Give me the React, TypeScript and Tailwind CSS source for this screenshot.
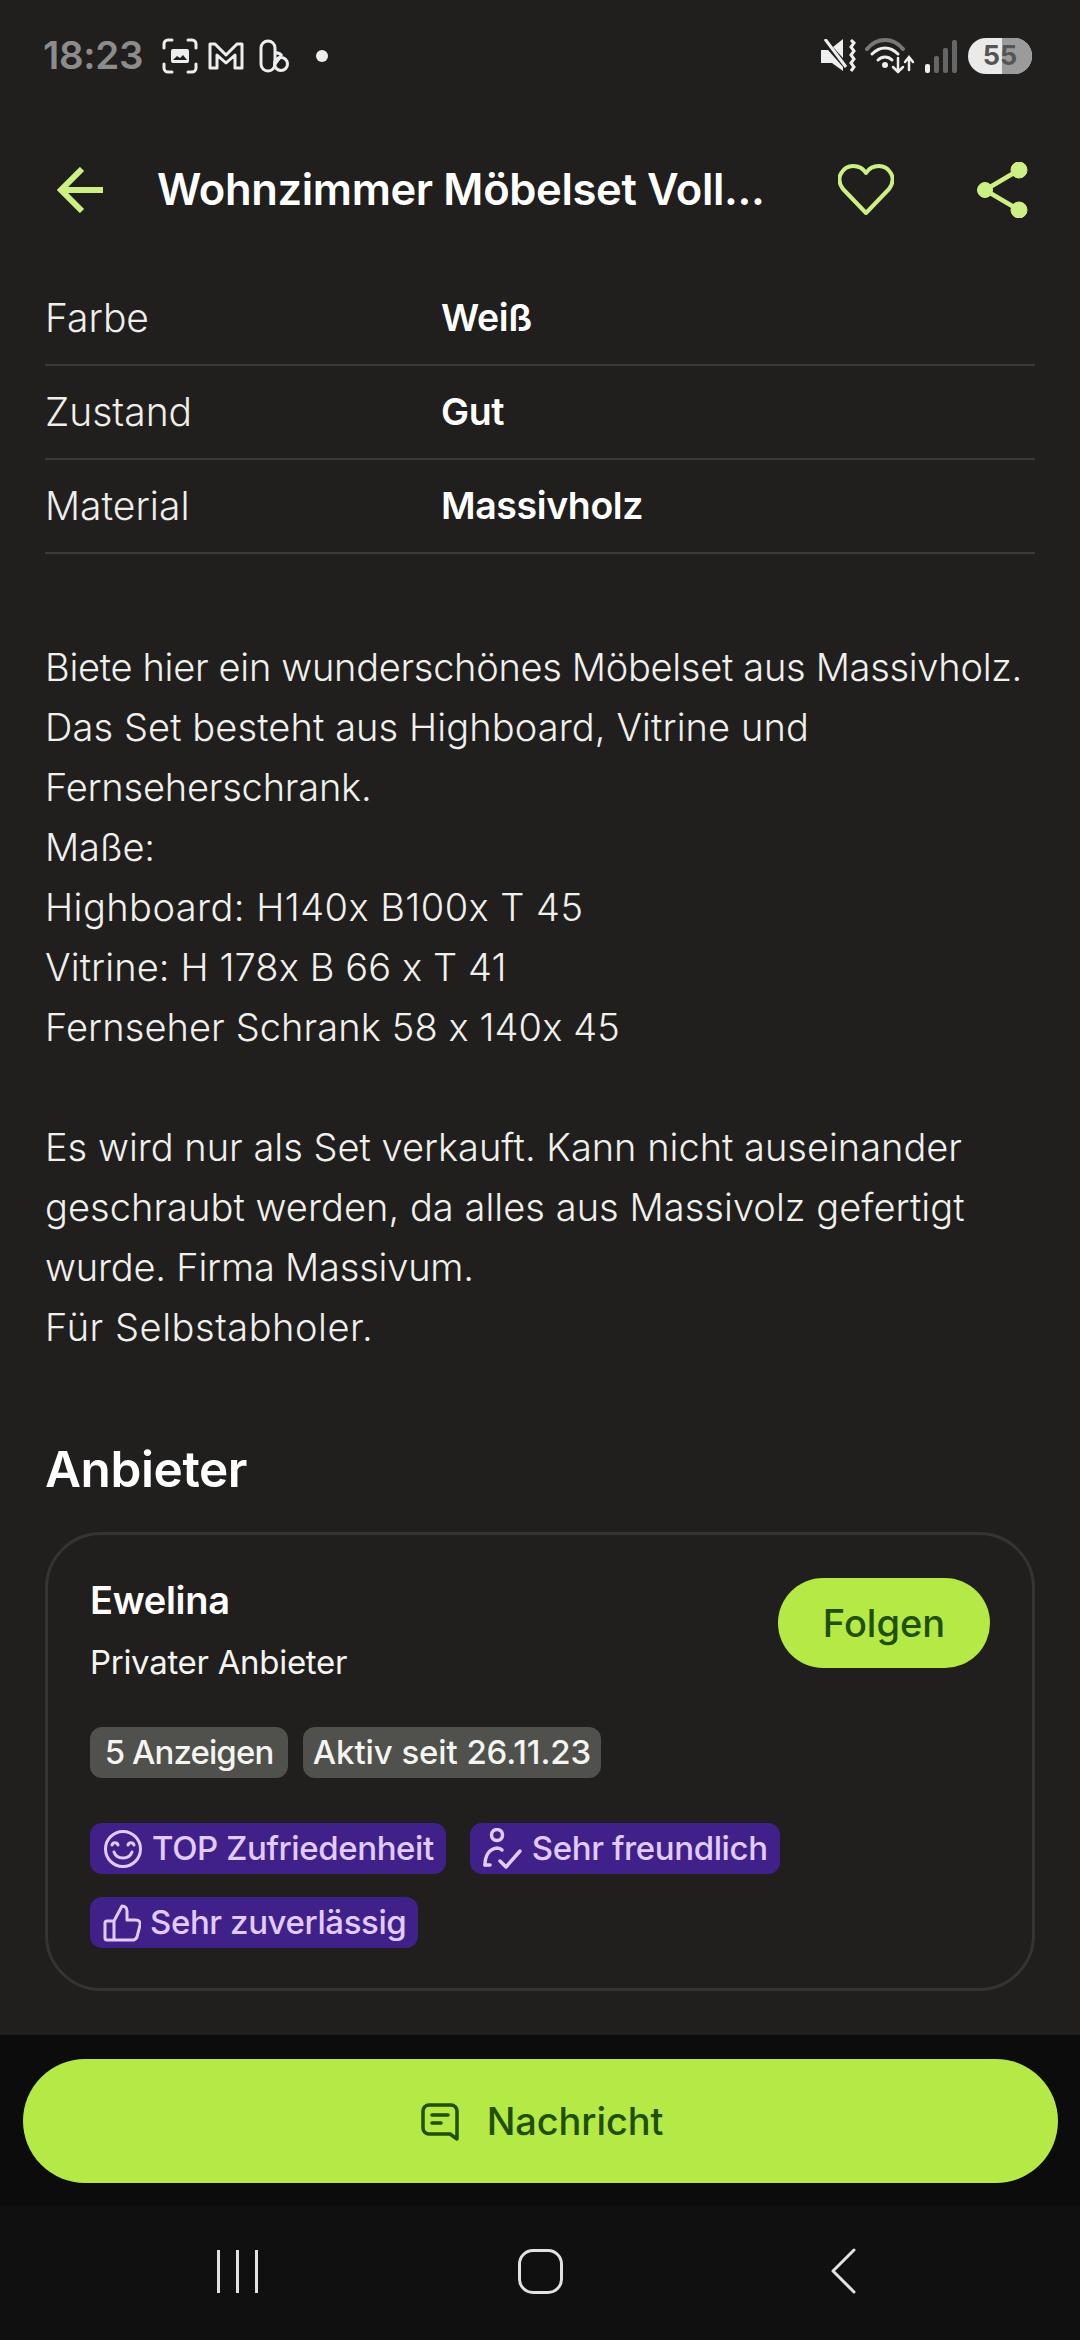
import React from "react";

const font = { fontFamily: '"Inter","Noto Sans",sans-serif' };

function Row({ label, value }: { label: string; value: string }) {
  return (
    <div className="flex h-[94px] items-center border-b-2 border-[#3a3a38]">
      <div className="w-[396px] text-[39px] font-light text-[#eeeeea]">{label}</div>
      <div className="text-[37.5px] font-semibold text-white tracking-[-0.4px]">{value}</div>
    </div>
  );
}

function Chip({ w, children }: { w: string; children: React.ReactNode }) {
  return (
    <div className={`flex h-[51px] items-center justify-center rounded-[12px] bg-[#50504c] text-[33px] font-medium text-[#f4f4f0] ${w}`}>
      {children}
    </div>
  );
}

function Purple({ icon, children }: { icon: React.ReactNode; children: React.ReactNode }) {
  return (
    <div className="flex h-[51px] items-center gap-[9px] rounded-[12px] bg-[#40218a] pl-[13px] pr-[12px] text-[33px] font-medium text-[#e2ccff] tracking-[-0.4px]">
      {icon}
      <span>{children}</span>
    </div>
  );
}

export default function App() {
  return (
    <div style={font} className="flex h-[2340px] w-[1080px] flex-col overflow-hidden bg-[#201f1e]">
      {/* status bar */}
      <div className="flex h-[112px] items-center pl-[43px] pr-[48px]">
        <span className="text-[38.5px] font-semibold text-[#8c8c8c] tracking-[-0.3px]">18:23</span>
        <div className="ml-[19px] flex items-center">
          <svg width="36" height="36" viewBox="0 0 36 36" fill="none" stroke="#eee" strokeWidth="3" strokeLinecap="round">
            <path d="M2 10V6a4 4 0 0 1 4-4h4M26 2h4a4 4 0 0 1 4 4v4M34 26v4a4 4 0 0 1-4 4h-4M10 34H6a4 4 0 0 1-4-4v-4" />
            <rect x="9" y="11" width="18" height="14" rx="2" fill="#eee" stroke="none" />
            <path d="M11 22l4-4 3 2 3-3 4 5z" fill="#201f1e" stroke="none" />
          </svg>
          <svg width="36" height="30" viewBox="0 0 36 30" fill="none" stroke="#eee" strokeWidth="3" strokeLinejoin="round" className="ml-[10px]">
            <path d="M2 3h5l11 11L29 3h5v24h-7V14l-9 8-9-8v13H2z" />
          </svg>
          <svg width="30" height="34" viewBox="0 0 30 34" fill="none" stroke="#eee" strokeWidth="3" className="ml-[15px]">
            <rect x="2" y="2" width="14" height="30" rx="7" />
            <path d="M16 14a7 7 0 0 1 7 3" />
            <circle cx="22" cy="25" r="6.5" />
            <path d="M16 25l6-8" />
          </svg>
          <div className="ml-[27px] h-[12px] w-[12px] rounded-full bg-[#eee]" />
        </div>
        <div className="ml-auto flex items-center">
          <svg width="36" height="34" viewBox="0 0 36 34" className="mr-[9px]" fill="#eee">
            <path d="M1 11h7l15 17v4l-11-8H1z" />
            <path d="M13 8l10-8v19z" />
            <path d="M5 0l21 28" stroke="#eee" strokeWidth="3" />
            <path d="M31 1l3 3-3 4 3 4-3 4 3 4-3 4 3 4-3 4" stroke="#eee" strokeWidth="3" fill="none" />
          </svg>
          <svg width="50" height="36" viewBox="0 0 50 36" fill="none" strokeLinecap="round" className="mr-[10px]">
            <path d="M2 11C12 -1 28 -1 38 11" stroke="#777" strokeWidth="4" />
            <path d="M7 16C15 8 25 8 33 16" stroke="#eee" strokeWidth="3" />
            <path d="M13 22c4-4 10-4 14 0" stroke="#eee" strokeWidth="3" />
            <circle cx="20" cy="27" r="3" fill="#eee" />
            <path d="M33 20v14m-5-5l5 5 5-5" stroke="#eee" strokeWidth="2.5" />
            <path d="M44 32V19m-4 5l4-5 4 5" stroke="#eee" strokeWidth="2.5" />
          </svg>
          <div className="mr-[11px] flex h-[33px] items-end gap-[4px]">
            <div className="h-[9px] w-[5px] rounded-[2px] bg-[#eee]" />
            <div className="h-[17px] w-[5px] rounded-[2px] bg-[#666]" />
            <div className="h-[25px] w-[5px] rounded-[2px] bg-[#666]" />
            <div className="h-[33px] w-[5px] rounded-[2px] bg-[#666]" />
          </div>
          <div className="relative flex h-[36px] w-[64px] items-center justify-center overflow-hidden rounded-full bg-[#eaeaea]">
            <div className="absolute bottom-0 right-0 top-0 w-[30px] bg-[#9b9b9b]" />
            <span className="relative text-[27px] font-bold text-[#555]">55</span>
          </div>
        </div>
      </div>

      {/* header */}
      <div className="flex h-[156px] items-center pl-[57px]">
        <svg width="46" height="46" viewBox="0 0 46 46" fill="none" stroke="#cdf085" strokeWidth="6">
          <path d="M46 23H5M25 2L4 23l21 21" />
        </svg>
        <div className="ml-[54px] w-[607px] whitespace-nowrap text-[43.5px] font-semibold text-white tracking-[-0.35px]">
          Wohnzimmer Möbelset Voll...
        </div>
        <svg width="56" height="52" viewBox="0 0 56 52" fill="none" stroke="#cdf085" strokeWidth="4" strokeLinejoin="round" className="ml-[74px]">
          <path d="M28 49L5 25C-4 13 6 2 15 2c6 0 10 2 13 7 3-5 7-7 13-7 9 0 19 11 10 23z" />
        </svg>
        <svg width="52" height="56" viewBox="0 0 52 56" fill="#cdf085" stroke="#cdf085" className="ml-[83px]">
          <circle cx="8" cy="28" r="7.5" />
          <circle cx="42" cy="8" r="8" />
          <circle cx="42" cy="48" r="8" />
          <path d="M8 28L42 8M8 28l34 20" strokeWidth="4.5" fill="none" />
        </svg>
      </div>

      {/* body */}
      <div className="min-h-0 flex-1 px-[45px]">
        <div className="mt-[4px]">
          <Row label="Farbe" value="Weiß" />
          <Row label="Zustand" value="Gut" />
          <Row label="Material" value="Massivholz" />
        </div>

        <div className="mt-[83px] text-[38px] font-light leading-[60px] text-[#f0f0ec]">
          <div className="tracking-[-0.3px]">Biete hier ein wunderschönes Möbelset aus Massivholz.</div>
          <div className="tracking-[0.1px]">Das Set besteht aus Highboard, Vitrine und</div>
          <div className="tracking-[-0.2px]">Fernseherschrank.</div>
          <div className="tracking-[-0.2px]">Maße:</div>
          <div className="tracking-[0.45px]">Highboard: H140x B100x T 45</div>
          <div className="tracking-[0.1px]">Vitrine: H 178x B 66 x T 41</div>
          <div className="tracking-[0.1px]">Fernseher Schrank 58 x 140x 45</div>
          <div className="h-[60px]" />
          <div className="tracking-[0px]">Es wird nur als Set verkauft. Kann nicht auseinander</div>
          <div className="tracking-[0.05px]">geschraubt werden, da alles aus Massivolz gefertigt</div>
          <div className="tracking-[-0.2px]">wurde. Firma Massivum.</div>
          <div className="tracking-[0.55px]">Für Selbstabholer.</div>
        </div>

        <div className="mt-[82px] text-[49.5px] font-semibold leading-[60px] text-white tracking-[-0.4px]">Anbieter</div>

        <div className="mt-[33px] h-[459px] rounded-[56px] border-[3px] border-[#343432] px-[42px] pt-[43px]">
          <div className="flex items-start justify-between">
            <div>
              <div className="text-[38px] font-semibold leading-[44px] text-white tracking-[-0.3px]">Ewelina</div>
              <div className="mt-[18px] text-[33px] font-normal leading-[44px] text-[#f4f4f0] tracking-[-0.3px]">Privater Anbieter</div>
            </div>
            <div className="flex h-[90px] w-[212px] items-center justify-center rounded-full bg-[#b5e945] text-[38px] font-medium text-[#1f4f00]">
              Folgen
            </div>
          </div>
          <div className="mt-[43px] flex gap-[15px]">
            <Chip w="w-[198px] tracking-[-0.9px]">5 Anzeigen</Chip>
            <Chip w="w-[298px] tracking-[-0.1px]">Aktiv seit 26.11.23</Chip>
          </div>
          <div className="mt-[45px] flex flex-wrap gap-x-[24px] gap-y-[23px]">
            <Purple
              icon={
                <svg width="40" height="40" viewBox="0 0 40 40" fill="none" stroke="#e2ccff" strokeWidth="3" strokeLinecap="round">
                  <circle cx="20" cy="20" r="17.5" />
                  <path d="M9 16c1-3 5-3 6 0M25 16c1-3 5-3 6 0" />
                  <path d="M11 23c3 8 15 8 18 0" />
                </svg>
              }
            >
              TOP Zufriedenheit
            </Purple>
            <Purple
              icon={
                <svg width="40" height="42" viewBox="0 0 40 42" fill="none" stroke="#e2ccff" strokeWidth="3.5" strokeLinecap="round" strokeLinejoin="round">
                  <circle cx="14" cy="7" r="5.5" />
                  <path d="M2 37c0-9 4-16 12-17 2 0 4 1 5 2" />
                  <path d="M2 37h5" />
                  <path d="M17 33l6 6 14-16" />
                </svg>
              }
            >
              Sehr freundlich
            </Purple>
            <Purple
              icon={
                <svg width="38" height="38" viewBox="0 0 38 38" fill="none" stroke="#e2ccff" strokeWidth="3" strokeLinejoin="round" strokeLinecap="round">
                  <path d="M11 17h-7a2 2 0 0 0-2 2v15a2 2 0 0 0 2 2h26c2 0 3-1 4-3l3-12c.5-3-1-5-4-5H24V7c0-3-2-5-5-5l-8 15v19" />
                </svg>
              }
            >
              Sehr zuverlässig
            </Purple>
          </div>
        </div>
      </div>

      {/* action bar */}
      <div className="flex h-[170px] justify-center bg-[#0b0c0b] pt-[24px]">
        <div className="flex h-[124px] w-[1035px] items-center justify-center rounded-full bg-[#b5e945]">
          <svg width="38" height="38" viewBox="0 0 38 38" fill="none" stroke="#1f4f00" strokeWidth="3.5" strokeLinecap="round" strokeLinejoin="round" className="ml-[4px] mt-[2px]">
            <path d="M8 2h22a6 6 0 0 1 6 6v28l-7-5H8a6 6 0 0 1-6-6V8a6 6 0 0 1 6-6z" />
            <path d="M11 12h16M11 20h9" />
          </svg>
          <span className="ml-[28px] text-[38px] font-medium text-[#1f4f00] tracking-[-0.1px]">Nachricht</span>
        </div>
      </div>

      {/* nav bar */}
      <div className="flex h-[135px] items-start bg-[#101010] pl-[217px] pt-[43px]">
        <div className="flex items-center">
          <div className="flex h-[43px] gap-[16px]">
            <div className="w-[3px] bg-[#e2e2e2]" />
            <div className="w-[3px] bg-[#e2e2e2]" />
            <div className="w-[3px] bg-[#e2e2e2]" />
          </div>
          <div className="ml-[260px] h-[45px] w-[45px] rounded-[15px] border-[3px] border-[#e2e2e2]" />
          <svg width="26" height="46" viewBox="0 0 26 46" fill="none" stroke="#e2e2e2" strokeWidth="3" strokeLinecap="round" strokeLinejoin="round" className="ml-[267px]">
            <path d="M24 2L3 23l21 21" />
          </svg>
        </div>
      </div>
    </div>
  );
}
